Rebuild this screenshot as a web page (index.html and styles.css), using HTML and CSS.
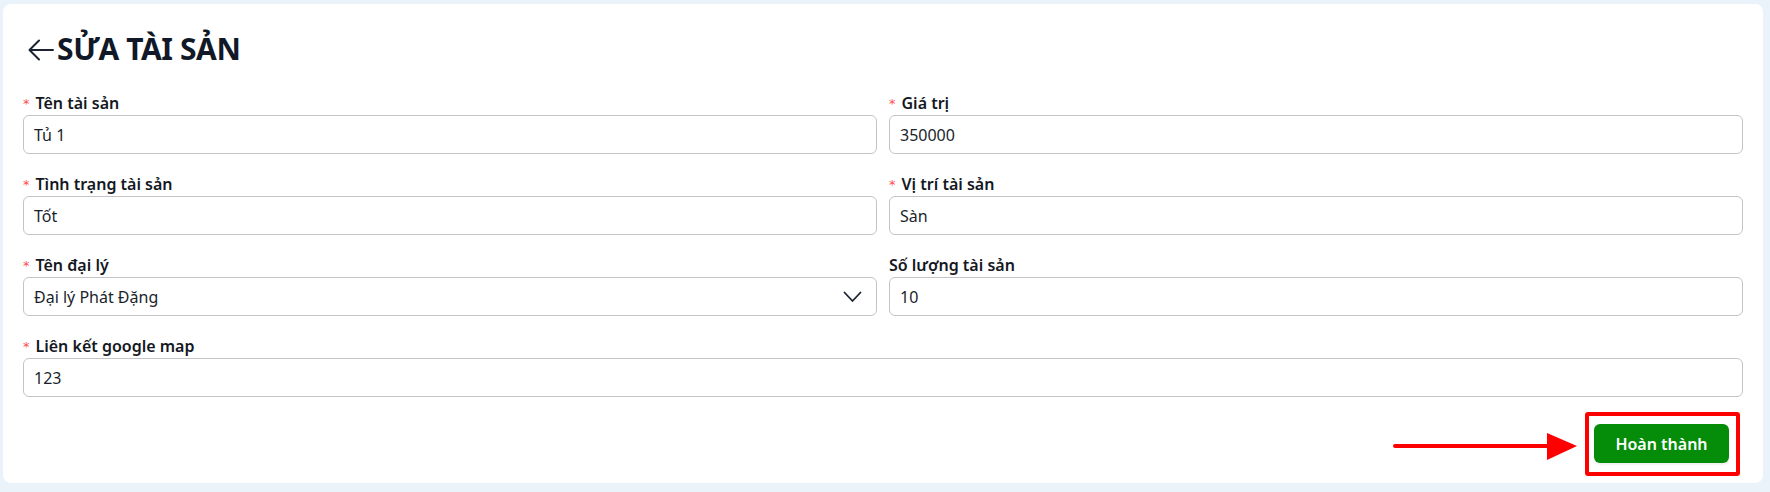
FILE: index.html
```html
<!DOCTYPE html>
<html lang="vi">
<head>
<meta charset="utf-8">
<title>Sửa tài sản</title>
<link rel="stylesheet" href="styles.css">
</head>
<body>
<div class="page">
  <div class="card">
    <div class="header">
      <svg class="back" width="26" height="22" viewBox="0 0 26 22"><path d="M25 11H2M11 1.5 1.5 11 11 20.5" fill="none" stroke="#1b2330" stroke-width="2" stroke-linecap="round" stroke-linejoin="round"/></svg>
      <h1 class="title">SỬA TÀI SẢN</h1>
    </div>
    <div class="form">
      <div class="field">
        <label class="label"><span class="req">*</span>Tên tài sản</label>
        <div class="input">Tủ 1</div>
      </div>
      <div class="field">
        <label class="label"><span class="req">*</span>Giá trị</label>
        <div class="input">350000</div>
      </div>
      <div class="field">
        <label class="label"><span class="req">*</span>Tình trạng tài sản</label>
        <div class="input">Tốt</div>
      </div>
      <div class="field">
        <label class="label"><span class="req">*</span>Vị trí tài sản</label>
        <div class="input">Sàn</div>
      </div>
      <div class="field">
        <label class="label"><span class="req">*</span>Tên đại lý</label>
        <div class="input select">Đại lý Phát Đặng
          <svg class="chev" width="19" height="12" viewBox="0 0 19 12"><path d="M1.5 1.5 9.5 10 17.5 1.5" fill="none" stroke="#1b2330" stroke-width="1.8" stroke-linecap="round" stroke-linejoin="round"/></svg>
        </div>
      </div>
      <div class="field">
        <label class="label">Số lượng tài sản</label>
        <div class="input">10</div>
      </div>
      <div class="field full">
        <label class="label"><span class="req">*</span>Liên kết google map</label>
        <div class="input">123</div>
      </div>
    </div>
    <div class="footer">
      <div class="btn-wrap">
        <svg class="anno-arrow" width="190" height="32" viewBox="0 0 190 32"><line x1="3" y1="16" x2="158" y2="16" stroke="#ff0000" stroke-width="4" stroke-linecap="round"/><polygon points="155,3 185,16 155,30" fill="#ff0000"/></svg>
        <button class="btn">Hoàn thành</button>
        <span class="anno-box"></span>
      </div>
    </div>
  </div>
</div>
</body>
</html>
```
FILE: styles.css
```css
* { box-sizing: border-box; }
html, body { margin: 0; padding: 0; }
body {
  background: #eaf3fa;
  font-family: "Noto Sans", "Open Sans", sans-serif;
  color: #111827;
  width: 1770px;
  height: 492px;
  overflow: hidden;
}
.page {
  padding: 4px 7px 9px 3px;
}
.card {
  background: #ffffff;
  border-radius: 8px;
  padding: 20px 20px 20px 20px;
}
.header {
  display: flex;
  align-items: center;
  height: 50px;
  margin-bottom: 18px;
  padding-left: 5px;
}
.back { display: block; margin-right: 3px; margin-top: 1px; }
.title {
  margin: 0;
  font-size: 30px;
  font-weight: 700;
  color: #111827;
  letter-spacing: -0.4px;
  line-height: 1;
}
.form {
  display: grid;
  grid-template-columns: 1fr 1fr;
  column-gap: 12px;
  row-gap: 19px;
}
.field.full { grid-column: 1 / 3; }
.label {
  display: flex;
  align-items: center;
  height: 22px;
  margin-bottom: 1px;
  font-size: 16px;
  font-weight: 600;
  color: #141823;
}
.req {
  color: #ff4d4f;
  font-family: "DejaVu Sans", sans-serif;
  font-size: 13px;
  font-weight: 400;
  margin: 0 6px 0 0;
}
.input {
  height: 39px;
  border: 1px solid #c4c4c6;
  border-radius: 6px;
  padding: 0 10px;
  display: flex;
  align-items: center;
  font-size: 16px;
  color: #1a1f2c;
}
.select { justify-content: space-between; padding-right: 14px; }
.chev { display: block; }
.footer {
  display: flex;
  justify-content: flex-end;
  margin-top: 27px;
  padding-right: 14px;
}
.btn-wrap { position: relative; }
.btn {
  display: block;
  width: 135px;
  height: 39px;
  border: 0;
  border-radius: 6px;
  background: #058c09;
  color: #ffffff;
  font-family: "Noto Sans", sans-serif;
  font-size: 16px;
  font-weight: 600;
  box-shadow: 0 2px 2px rgba(0,0,0,0.06);
}
.anno-box {
  position: absolute;
  left: -9px;
  right: -11px;
  top: -12px;
  bottom: -13px;
  border: 4px solid #ff0000;
  border-radius: 3px;
}
.anno-arrow {
  position: absolute;
  left: -202px;
  top: 6px;
}
```
